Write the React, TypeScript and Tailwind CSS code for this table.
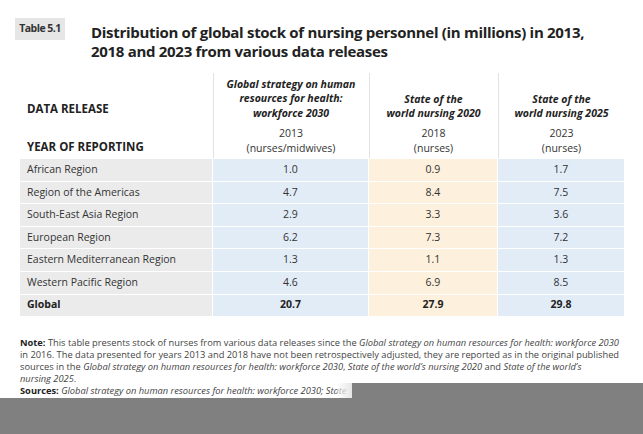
import React from 'react';

const rows = [
  ['African Region', '1.0', '0.9', '1.7'],
  ['Region of the Americas', '4.7', '8.4', '7.5'],
  ['South-East Asia Region', '2.9', '3.3', '3.6'],
  ['European Region', '6.2', '7.3', '7.2'],
  ['Eastern Mediterranean Region', '1.3', '1.1', '1.3'],
  ['Western Pacific Region', '4.6', '6.9', '8.5'],
];

const font = { fontFamily: '"Open Sans", "Noto Sans", sans-serif' };

export default function App() {
  return (
    <div
      className="flex h-[434px] w-[643px] flex-col overflow-hidden bg-white text-[#333]"
      style={font}
    >
      {/* Title */}
      <div className="flex h-[70px] items-start pt-[18px] pl-[15px]">
        <div className="flex h-[22px] w-[50px] items-center justify-center bg-[#e6e6e6] text-[10.5px] font-bold tracking-[-0.5px] text-[#333]">
          Table 5.1
        </div>
        <h1 className="ml-[26px] mt-[5px] text-[15px] leading-[19px] font-bold tracking-[-0.3px] text-[#222]">
          Distribution of global stock of nursing personnel (in millions) in 2013,
          <br />
          2018 and 2023 from various data releases
        </h1>
      </div>

      {/* Table */}
      <div className="ml-[20px] mt-[3px] grid w-[603px] grid-cols-[192px_155px_128px_126px] gap-x-[1px]">
        {/* release row */}
        <div className="flex h-[47px] items-end pb-[3px] pl-[7px] text-[11.5px] font-bold text-[#222]">
          DATA RELEASE
        </div>
        <div className="flex h-[47px] items-end justify-center border-l border-[#e2e2e2] text-center text-[10.5px] leading-[14.5px] font-bold italic text-[#222]">
          Global strategy on human
          <br />
          resources for health:
          <br />
          workforce 2030
        </div>
        <div className="flex h-[47px] items-end justify-center border-l border-[#e2e2e2] text-center text-[10.5px] leading-[14px] font-bold italic text-[#222]">
          State of the
          <br />
          world nursing 2020
        </div>
        <div className="flex h-[47px] items-end justify-center border-l border-[#e2e2e2] text-center text-[10.5px] leading-[14px] font-bold italic text-[#222]">
          State of the
          <br />
          world nursing 2025
        </div>

        {/* year row */}
        <div className="flex h-[38px] items-end pb-[3px] pl-[7px] text-[11.5px] font-bold text-[#222]">
          YEAR OF REPORTING
        </div>
        <div className="flex h-[38px] flex-col items-center justify-end border-l border-[#e2e2e2] pb-[3px] text-[10.5px] leading-[14.5px]">
          <span>2013</span>
          <span>(nurses/midwives)</span>
        </div>
        <div className="flex h-[38px] flex-col items-center justify-end border-l border-[#e2e2e2] pb-[3px] text-[10.5px] leading-[14.5px]">
          <span>2018</span>
          <span>(nurses)</span>
        </div>
        <div className="flex h-[38px] flex-col items-center justify-end border-l border-[#e2e2e2] pb-[3px] text-[10.5px] leading-[14.5px]">
          <span>2023</span>
          <span>(nurses)</span>
        </div>

        {rows.map((r) => (
          <React.Fragment key={r[0]}>
            <div className="mt-[1px] flex h-[21.6px] items-center bg-[#ebebeb] pl-[7px] text-[10.5px]">
              {r[0]}
            </div>
            <div className="mt-[1px] flex h-[21.6px] items-center justify-center bg-[#e2ecf7] text-[10.5px]">
              {r[1]}
            </div>
            <div className="mt-[1px] flex h-[21.6px] items-center justify-center bg-[#fdf0dc] text-[10.5px]">
              {r[2]}
            </div>
            <div className="mt-[1px] flex h-[21.6px] items-center justify-center bg-[#e2ecf7] text-[10.5px]">
              {r[3]}
            </div>
          </React.Fragment>
        ))}
        <div className="mt-[1px] flex h-[21.6px] items-center bg-[#ebebeb] pl-[7px] text-[10.5px] font-bold text-[#222]">
          Global
        </div>
        <div className="mt-[1px] flex h-[21.6px] items-center justify-center bg-[#e2ecf7] text-[10.5px] font-bold text-[#222]">
          20.7
        </div>
        <div className="mt-[1px] flex h-[21.6px] items-center justify-center bg-[#fdf0dc] text-[10.5px] font-bold text-[#222]">
          27.9
        </div>
        <div className="mt-[1px] flex h-[21.6px] items-center justify-center bg-[#e2ecf7] text-[10.5px] font-bold text-[#222]">
          29.8
        </div>
      </div>

      {/* Note */}
      <div className="ml-[20px] mt-[21px] whitespace-nowrap text-[9.3px] leading-[12px] text-[#444]">
        <span className="font-bold text-[#222]">Note:</span> This table presents stock of nurses from various data releases since the{' '}
        <i>Global strategy on human resources for health: workforce 2030</i>
        <br />
        in 2016. The data presented for years 2013 and 2018 have not been retrospectively adjusted, they are reported as in the original published
        <br />
        sources in the <i>Global strategy on human resources for health: workforce 2030</i>, <i>State of the world’s nursing 2020</i> and{' '}
        <i>State of the world’s</i>
        <br />
        <i>nursing 2025</i>.
      </div>

      {/* Sources line, cut by grey area */}
      <div className="-mt-[2px] flex h-[15px]">
        <div className="relative w-[352px] overflow-hidden whitespace-nowrap pl-[20px] text-[9.3px] leading-[15px] text-[#444]">
          <span className="font-bold text-[#222]">Sources:</span> <i>Global strategy on human resources for health: workforce 2030; State</i>
          <div className="absolute top-0 right-0 h-full w-[15px] bg-gradient-to-r from-white/50 to-[#e6e6e6]" />
        </div>
        <div className="flex-1 bg-[#808080]" />
      </div>
      <div className="flex-1 bg-[#808080]" />
    </div>
  );
}
